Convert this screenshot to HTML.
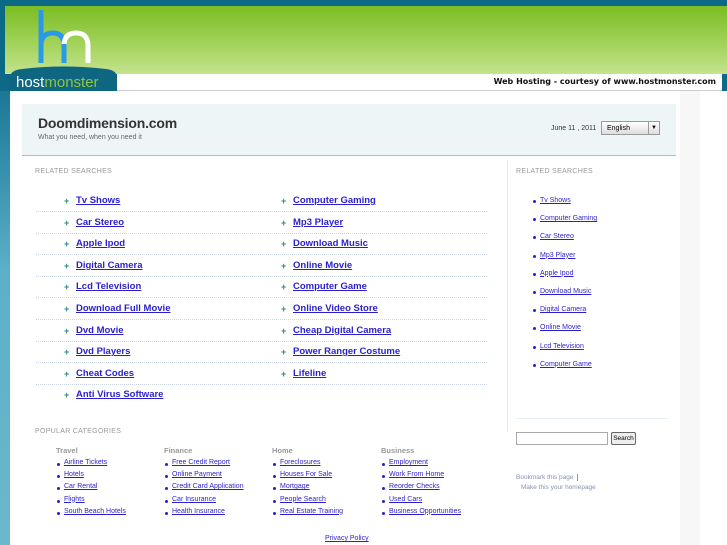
<!DOCTYPE html>
<html><head><meta charset="utf-8"><style>
*{margin:0;padding:0;box-sizing:border-box}
body{width:727px;height:545px;overflow:hidden;position:relative;background:#0d6a87;font-family:"Liberation Sans",sans-serif}
.a{position:absolute}
.green{left:5px;top:6px;width:722px;height:68px;background:linear-gradient(#7bbd22,#a6d460 60%,#c4e38e)}
.bar{left:117px;top:74px;width:605px;height:17px;background:#fff;border-bottom:1px solid #ccc;font:bold 8px "DejaVu Sans",sans-serif;text-align:right;padding:3px 6px 0 0;color:#111}
.page{left:10px;top:91px;width:670px;height:454px;background:#fff}
.gray{left:680px;top:91px;width:20px;height:454px;background:#f7f7f7}
.rgt{left:700px;top:91px;width:27px;height:454px;background:#fff}
.lstrip{left:0;top:91px;width:10px;height:454px;background:linear-gradient(#1a7896,#5cb0c8 40%,#6ab8cc)}
.hdr{left:22px;top:104px;width:654px;height:52px;background:#eef5f7;border-bottom:1px solid #a8b8e8}
.lbl{font-size:7px;color:#999;letter-spacing:.3px}
.m{font-size:9.5px;font-weight:bold;color:#2a1fcc;text-decoration:underline;line-height:12px}
.ar{color:#2a8a80;font-size:9px;font-weight:bold;line-height:11px}
.dot{height:0;border-top:1px dotted #c8d4e4}
.s{font-size:7px;color:#2a1fcc;text-decoration:underline}
.b{width:3px;height:3px;background:#2a1fcc;border-radius:50%}
.ch{font-size:7.5px;color:#999;font-weight:bold}
</style></head><body>
<div class="a green"></div>
<div class="a bar">Web Hosting - courtesy of www.hostmonster.com</div>
<div class="a lstrip"></div>
<div class="a page"></div>
<div class="a gray"></div>
<div class="a rgt"></div>
<svg class="a" style="left:10px;top:8px" width="110" height="84">
<path d="M31 2V55M31 38Q31 25 43 25Q53 25 54 36" stroke="#2a9ae8" stroke-width="5" fill="none"/>
<path d="M54 38Q54 25 66 25Q78 25 78 38V55" stroke="#fff" stroke-width="5" fill="none"/>
<path d="M54 36V55" stroke="#2a9ae8" stroke-width="5"/>
<path d="M0 83V70Q0 62 12 61Q53 56 96 61Q107 62 107 70V83Z" fill="#0f6680"/>
<text x="6" y="79" font-family="Liberation Sans" font-size="15" fill="#fff">host<tspan fill="#8ec63f">monster</tspan></text>
</svg>
<div class="a hdr"></div>
<div class="a" style="left:38px;top:115px;font-size:14px;font-weight:bold;color:#333;letter-spacing:-.2px">Doomdimension.com</div>
<div class="a" style="left:38px;top:134px;font-size:7px;color:#666">What you need, when you need it</div>
<div class="a" style="left:551px;top:125px;font-size:7px;color:#333">June 11 , 2011</div>
<div class="a" style="left:601px;top:121px;width:59px;height:14px;border:1px solid #999;background:linear-gradient(#fff,#ddd);font-size:7px;padding:3px 5px">English<span style="position:absolute;right:0;top:0;width:11px;height:12px;border-left:1px solid #999;font-size:6px;text-align:center;line-height:12px">▼</span></div>
<div class="a lbl" style="left:35px;top:168px">RELATED SEARCHES</div>
<div class="a" style="left:507px;top:160px;width:1px;height:272px;background:#e4ecf2"></div>
<div class="a lbl" style="left:516px;top:168px">RELATED SEARCHES</div>
<div class="a" style="left:516px;top:418px;width:152px;height:1px;background:#e4ecf2"></div>
<div id="main"></div>
<div class="a lbl" style="left:35px;top:428px">POPULAR CATEGORIES</div>
<div class="a" style="left:516px;top:432px;width:92px;height:13px;border:1px solid #aaa"></div>
<div class="a" style="left:611px;top:432px;width:25px;height:13px;border:1px solid #666;border-radius:2px;background:#eee;font-size:6.5px;text-align:center;line-height:11px">Search</div>
<div class="a" style="left:516px;top:474px;font-size:6.5px;color:#8890b0">Bookmark this page <span style="border-left:1px solid #8890b0;margin-left:2px">&nbsp;</span></div>
<div class="a" style="left:521px;top:484px;font-size:6.5px;color:#8890b0">Make this your homepage</div>
<div class="a s" style="left:325px;top:535px">Privacy Policy</div>
<script>
var L=["Tv Shows","Car Stereo","Apple Ipod","Digital Camera","Lcd Television","Download Full Movie","Dvd Movie","Dvd Players","Cheat Codes","Anti Virus Software"];
var R=["Computer Gaming","Mp3 Player","Download Music","Online Movie","Computer Game","Online Video Store","Cheap Digital Camera","Power Ranger Costume","Lifeline"];
var h="";
for(var i=0;i<10;i++){var y=196+i*21.6;
h+='<div class="a ar" style="left:64px;top:'+y+'px">+</div><div class="a m" style="left:76px;top:'+(y-1)+'px">'+L[i]+'</div>';
if(R[i])h+='<div class="a ar" style="left:281px;top:'+y+'px">+</div><div class="a m" style="left:293px;top:'+(y-1)+'px">'+R[i]+'</div>';
if(i<9)h+='<div class="a dot" style="left:36px;top:'+(y+15)+'px;width:451px"></div>';}
var S=["Tv Shows","Computer Gaming","Car Stereo","Mp3 Player","Apple Ipod","Download Music","Digital Camera","Online Movie","Lcd Television","Computer Game"];
for(i=0;i<10;i++){var y=197+i*18.2;h+='<div class="a b" style="left:533px;top:'+(y+3)+'px"></div><div class="a s" style="left:540px;top:'+y+'px">'+S[i]+'</div>';}
var C=[["Travel",56,["Airline Tickets","Hotels","Car Rental","Flights","South Beach Hotels"]],["Finance",164,["Free Credit Report","Online Payment","Credit Card Application","Car Insurance","Health Insurance"]],["Home",272,["Foreclosures","Houses For Sale","Mortgage","People Search","Real Estate Training"]],["Business",381,["Employment","Work From Home","Reorder Checks","Used Cars","Business Opportunities"]]];
C.forEach(function(c){h+='<div class="a ch" style="left:'+c[1]+'px;top:446px">'+c[0]+'</div>';
c[2].forEach(function(t,j){var y=459+j*12.2;h+='<div class="a b" style="left:'+(c[1]+1)+'px;top:'+(y+4)+'px"></div><div class="a s" style="left:'+(c[1]+8)+'px;top:'+y+'px">'+t+'</div>';});});
document.getElementById("main").innerHTML=h;
</script>
</body></html>
